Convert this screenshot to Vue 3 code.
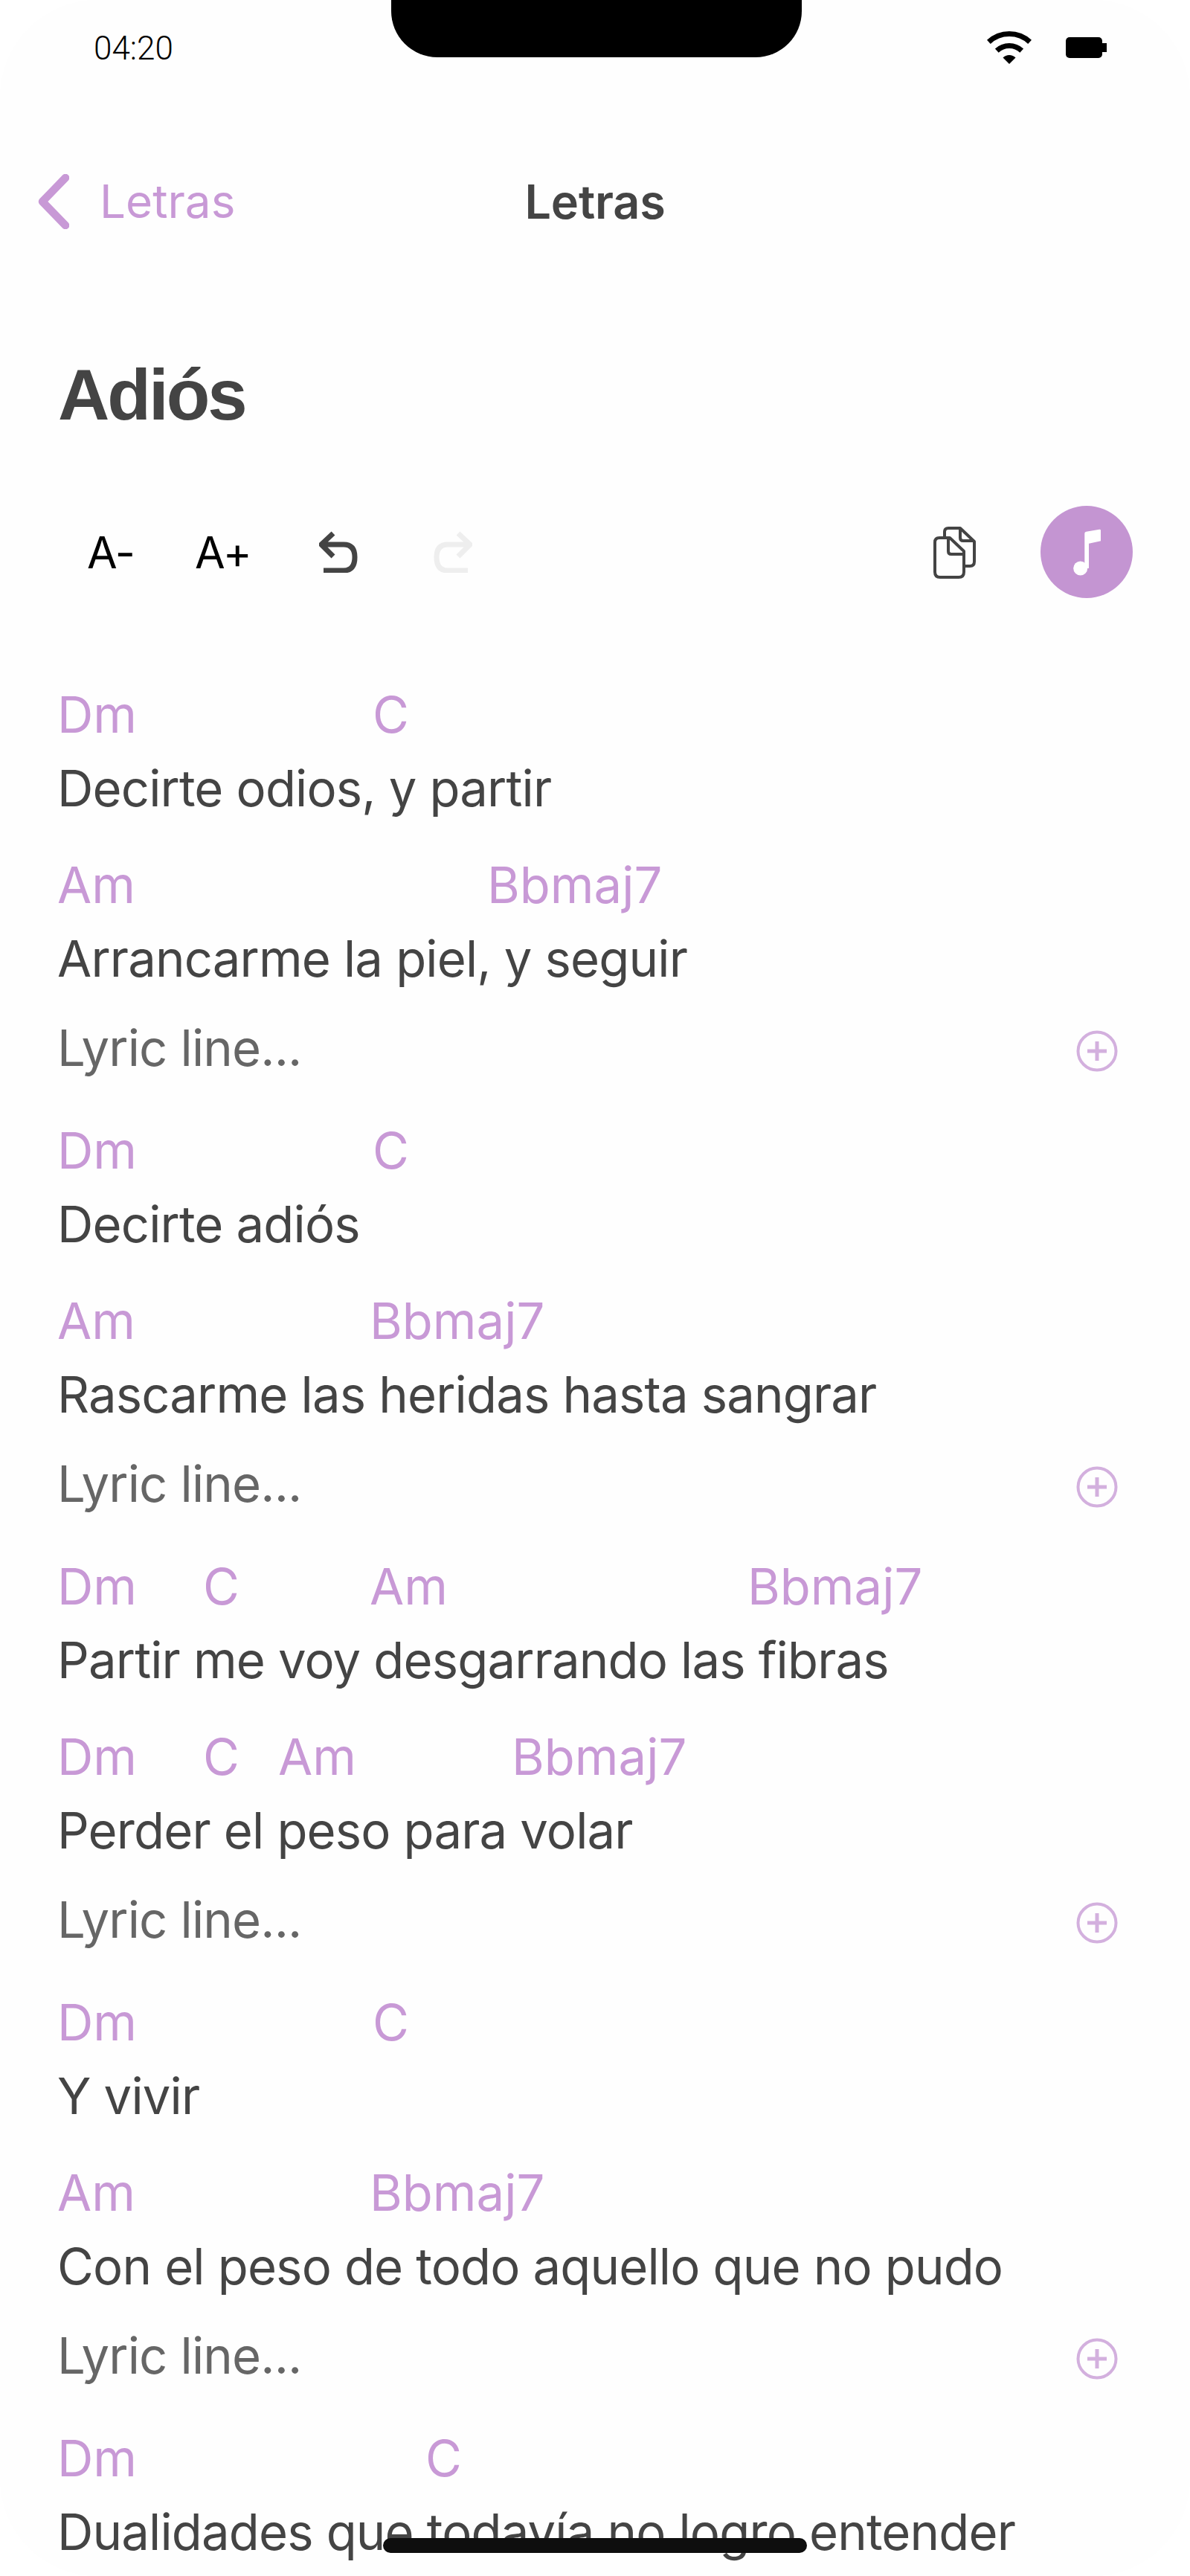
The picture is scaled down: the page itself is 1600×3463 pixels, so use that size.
<script setup>
const stanzas = [
  { lines: [
    { chords: [['Dm', 0], ['C', 424]], text: 'Decirte odios, y partir' },
    { chords: [['Am', 0], ['Bbmaj7', 578]], text: 'Arrancarme la piel, y seguir' },
  ], placeholder: true },
  { lines: [
    { chords: [['Dm', 0], ['C', 424]], text: 'Decirte adiós' },
    { chords: [['Am', 0], ['Bbmaj7', 420]], text: 'Rascarme las heridas hasta sangrar' },
  ], placeholder: true },
  { lines: [
    { chords: [['Dm', 0], ['C', 196], ['Am', 420], ['Bbmaj7', 928]], text: 'Partir me voy desgarrando las fibras' },
    { chords: [['Dm', 0], ['C', 196], ['Am', 297], ['Bbmaj7', 611]], text: 'Perder el peso para volar' },
  ], placeholder: true },
  { lines: [
    { chords: [['Dm', 0], ['C', 424]], text: 'Y vivir' },
    { chords: [['Am', 0], ['Bbmaj7', 420]], text: 'Con el peso de todo aquello que no pudo' },
  ], placeholder: true },
  { lines: [
    { chords: [['Dm', 0], ['C', 495]], text: 'Dualidades que todavía no logro entender' },
  ], placeholder: false },
]
</script>

<template>
  <div class="screen">
    <div class="status">
      <span class="time">04:20</span>
      <div class="notch"></div>
      <div class="status-icons">
        <svg width="60" height="44" viewBox="0 0 60 44">
          <path d="M30 44 L21.5 35.5 A12 12 0 0 1 38.5 35.5 Z" fill="#000"/>
          <path d="M13.3 26.1 A24.5 24.5 0 0 1 46.7 26.1 M2.4 14.4 A40.5 40.5 0 0 1 57.6 14.4" fill="none" stroke="#000" stroke-width="7"/>
        </svg>
        <svg class="battery" width="55" height="28" viewBox="0 0 55 28">
          <rect x="0" y="0" width="49" height="28" rx="5" fill="#000"/>
          <rect x="49" y="8" width="6" height="12" fill="#000"/>
        </svg>
      </div>
    </div>

    <nav class="nav">
      <div class="back">
        <svg width="42" height="74" viewBox="0 0 42 74">
          <path d="M37 5 L6 37 L37 69" fill="none" stroke="#c899d6" stroke-width="10.5" stroke-linecap="round" stroke-linejoin="round"/>
        </svg>
        <span>Letras</span>
      </div>
      <div class="nav-title">Letras</div>
    </nav>

    <h1 class="title">Adiós</h1>

    <div class="toolbar">
      <span class="size-btn minus">A-</span>
      <span class="size-btn plus">A+</span>
      <svg class="undo" width="52" height="56" viewBox="0 0 52 56">
        <path d="M19 3 L3 18 L19 34 M3 18 H33 Q48 18 48 35 Q48 53 33 53 H6" fill="none" stroke="#444" stroke-width="7"/>
      </svg>
      <svg class="redo" width="52" height="56" viewBox="0 0 52 56">
        <path d="M33 3 L49 18 L33 34 M49 18 H19 Q4 18 4 35 Q4 53 19 53 H46" fill="none" stroke="#eee" stroke-width="7"/>
      </svg>
      <div class="spacer"></div>
      <svg class="copy" width="58" height="70" viewBox="0 0 58 70">
        <path d="M15 14 V7 Q15 2 20 2 H36 L55 20 V47 Q55 53 49 53 H43" fill="none" stroke="#444" stroke-width="4" stroke-linejoin="round"/>
        <path d="M36 2 V15 Q36 19 40 19 H55" fill="none" stroke="#444" stroke-width="4" stroke-linejoin="round"/>
        <path d="M8 15 H22 L41 33 V61 Q41 68 34 68 H9 Q2 68 2 61 V21 Q2 15 8 15 Z" fill="#fefefe" stroke="#444" stroke-width="4" stroke-linejoin="round"/>
        <path d="M20 15 V33 Q20 37 24 37 H41" fill="none" stroke="#444" stroke-width="4" stroke-linejoin="round"/>
      </svg>
      <div class="music">
        <svg width="40" height="66" viewBox="0 0 40 66">
          <g transform="translate(2 2)">
            <circle cx="9.7" cy="53" r="9.5" fill="#fff"/>
            <path d="M15.3 53 V6 Q15.3 4 17.5 3.7 L35 .7 Q37 .4 37 2 V16.3 L21 19.7 V53 Z" fill="#fff"/>
          </g>
        </svg>
      </div>
    </div>

    <div class="sheet">
      <section v-for="(stanza, i) in stanzas" :key="i" class="stanza">
        <div v-for="(line, j) in stanza.lines" :key="j" class="line">
          <div class="chords">
            <span v-for="(c, k) in line.chords" :key="k" class="chord" :style="{ left: c[1] + 'px' }">{{ c[0] }}</span>
          </div>
          <div class="lyric">{{ line.text }}</div>
        </div>
        <div v-if="stanza.placeholder" class="lyric-input">
          <span>Lyric line...</span>
          <svg width="56" height="56" viewBox="0 0 56 56">
            <circle cx="28" cy="28" r="25.5" fill="none" stroke="#d3b0de" stroke-width="4"/>
            <path d="M28 15 V41 M15 28 H41" fill="none" stroke="#d3b0de" stroke-width="5"/>
          </svg>
        </div>
      </section>
    </div>

    <div class="home"></div>
  </div>
</template>

<style>
html, body { margin: 0; background: #fff; }
</style>

<style scoped>
.screen {
  position: relative;
  width: 1600px;
  height: 3463px;
  overflow: hidden;
  background: #fefefe;
  border-radius: 130px;
  font-family: Inter, "Liberation Sans", sans-serif;
  color: #444;
}
.status {
  display: flex;
  justify-content: space-between;
  align-items: flex-start;
  height: 77px;
  padding: 41px 112px 0 126px;
  box-sizing: border-box;
}
.time {
  font-family: Roboto, "Liberation Sans", sans-serif;
  font-weight: 300;
  font-size: 44px;
  line-height: 48px;
  color: #000;
}
.notch {
  position: absolute;
  left: 526px;
  top: 0;
  width: 552px;
  height: 77px;
  background: #000;
  border-radius: 0 0 62px 62px;
}
.status-icons {
  display: flex;
  align-items: flex-start;
  gap: 46px;
  margin-top: 1px;
}
.battery { margin-top: 8px; }
.nav {
  position: relative;
  display: flex;
  align-items: center;
  height: 230px;
  padding: 158px 0 0 51px;
  box-sizing: border-box;
}
.back {
  display: flex;
  align-items: center;
  gap: 41px;
  font-size: 62px;
  line-height: 72px;
  color: #c899d6;
}
.nav-title {
  position: absolute;
  left: 0;
  right: 0;
  top: 158px;
  text-align: center;
  font-size: 63px;
  letter-spacing: -0.2px;
  line-height: 72px;
  font-weight: 600;
}
.title {
  margin: -41px 0 0;
  padding: 210px 0 0 78px;
  font-family: "Liberation Sans", Arial, sans-serif;
  font-size: 96px;
  letter-spacing: -3px;
  line-height: 110px;
  font-weight: 700;
  height: 320px;
  box-sizing: border-box;
}
.toolbar {
  display: flex;
  align-items: center;
  height: 124px;
  margin-top: 94px;
  padding: 0 77px 0 118px;
}
.size-btn {
  font-size: 59px;
  letter-spacing: -1px;
  line-height: 64px;
  color: #000;
  padding-top: 2px;
}
.minus { width: 145px; margin-left: -1px; padding-right: 1px; }
.plus { width: 166px; margin-left: -1px; padding-right: 1px; }
.redo { margin-left: 102px; }
.spacer { flex: 1; }
.copy { margin-top: 2px; }
.music {
  display: flex;
  align-items: center;
  justify-content: center;
  width: 124px;
  height: 124px;
  margin-left: 86px;
  border-radius: 50%;
  background: #c495d2;
}
.sheet {
  display: flex;
  flex-direction: column;
  gap: 37px;
  margin-top: 106px;
  padding: 0 97px 0 77px;
  font-size: 67px;
  letter-spacing: -0.85px;
}
.stanza {
  display: flex;
  flex-direction: column;
  gap: 29px;
}
.chords {
  position: relative;
  height: 100px;
}
.chord {
  position: absolute;
  top: 1px;
  line-height: 100px;
  letter-spacing: 0;
  color: #c899d6;
  white-space: nowrap;
}
.lyric {
  height: 100px;
  line-height: 100px;
  white-space: nowrap;
}
.lyric-input {
  display: flex;
  align-items: center;
  justify-content: space-between;
  height: 100px;
  margin-top: -9px;
  line-height: 100px;
  color: #666;
}
.lyric-input svg { margin-top: 8px; }
.home {
  position: absolute;
  left: 515px;
  top: 3412px;
  width: 570px;
  height: 20px;
  border-radius: 10px;
  background: #0e0e0e;
}
</style>
